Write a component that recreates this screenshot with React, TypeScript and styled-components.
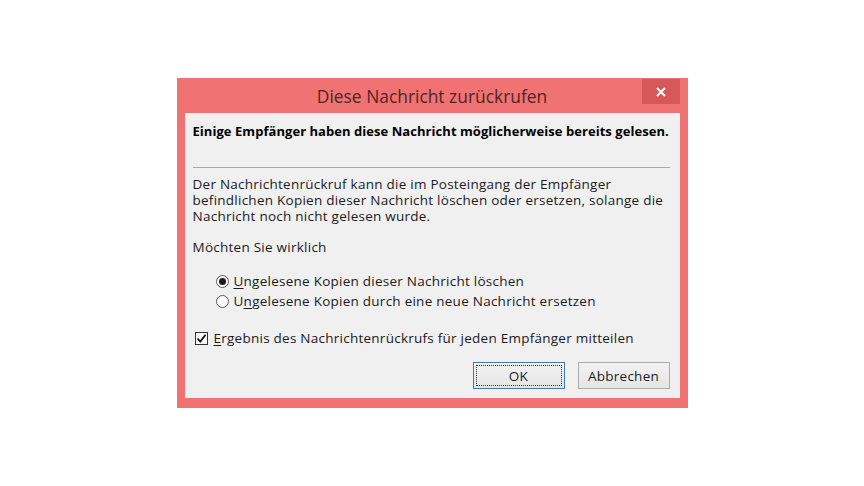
import React from "react";
import styled, { createGlobalStyle } from "styled-components";

const Global = createGlobalStyle`
  html, body { margin: 0; padding: 0; background: #ffffff; }
  body { font-family: "Open Sans", "Noto Sans", sans-serif; }
`;

const Page = styled.div`
  width: 864px;
  height: 486px;
  display: flex;
  align-items: center;
  justify-content: center;
`;

const Window = styled.div`
  width: 511px;
  box-sizing: border-box;
  background: #f07272;
  padding: 0 8px 10px 8px;
  display: flex;
  flex-direction: column;
`;

const TitleBar = styled.div`
  height: 35px;
  display: grid;
  grid-template-columns: 38px 1fr 38px;
  align-items: start;
`;

const Title = styled.div`
  grid-column: 2;
  text-align: center;
  font-size: 17.4px;
  line-height: 36px;
  color: #4f2626;
`;

const CloseButton = styled.div`
  grid-column: 3;
  margin-top: 1px;
  height: 25px;
  background: #d65858;
  display: flex;
  align-items: center;
  justify-content: center;
`;

const Content = styled.div`
  background: #f0f0f0;
  padding: 10px 10px 9px 8px;
  color: #1b1b1b;
  font-size: 13.5px;
  letter-spacing: 0.25px;
  line-height: 16px;
`;

const Headline = styled.div`
  font-weight: 700;
  font-size: 13px;
  letter-spacing: 0.05px;
  color: #000;
`;

const Separator = styled.div`
  height: 1px;
  background: #a8a8a8;
  margin: 28px 0 8px 0;
`;

const Paragraph = styled.div``;

const Question = styled.div`
  margin-top: 15px;
`;

const Options = styled.div`
  margin-top: 16px;
  padding-left: 23px;
  display: flex;
  flex-direction: column;
`;

const OptionRow = styled.div`
  height: 20px;
  display: flex;
  align-items: center;
  gap: 5px;
`;

const Radio = styled.span<{ $checked?: boolean }>`
  width: 13px;
  height: 13px;
  box-sizing: border-box;
  border-radius: 50%;
  border: 1px solid #5a5a5a;
  background: #fff;
  display: inline-flex;
  align-items: center;
  justify-content: center;
  &::after {
    content: "";
    width: 7px;
    height: 7px;
    border-radius: 50%;
    background: ${(p) => (p.$checked ? "#1a1a1a" : "transparent")};
  }
`;

const CheckRow = styled.div`
  margin-top: 17px;
  height: 20px;
  display: flex;
  align-items: center;
  gap: 6px;
  padding-left: 2px;
`;

const CheckBox = styled.span`
  width: 13px;
  height: 13px;
  box-sizing: border-box;
  border: 1px solid #333;
  background: #fff;
  display: inline-flex;
  align-items: center;
  justify-content: center;
`;

const Mn = styled.span`
  text-decoration: underline;
  text-underline-offset: 2px;
`;

const ButtonRow = styled.div`
  margin-top: 14px;
  display: flex;
  justify-content: flex-end;
  gap: 13px;
`;

const Button = styled.div<{ $default?: boolean }>`
  width: 92px;
  height: 27px;
  box-sizing: border-box;
  border: 1px solid ${(p) => (p.$default ? "#3d7bad" : "#adadad")};
  background: linear-gradient(#f2f2f2, #e5e5e5);
  display: flex;
  align-items: center;
  justify-content: center;
  padding: 2px;
  color: #1b1b1b;
`;

const Focus = styled.div<{ $on?: boolean }>`
  flex: 1;
  align-self: stretch;
  border: 1px dotted ${(p) => (p.$on ? "#333" : "transparent")};
  display: flex;
  align-items: center;
  justify-content: center;
`;

export default function App() {
  return (
    <>
      <Global />
      <Page>
        <Window>
          <TitleBar>
            <Title>Diese Nachricht zurückrufen</Title>
            <CloseButton>
              <svg width="10" height="10" viewBox="0 0 10 10">
                <path d="M1 1 L9 9 M9 1 L1 9" stroke="#ffffff" strokeWidth="2" />
              </svg>
            </CloseButton>
          </TitleBar>
          <Content>
            <Headline>Einige Empfänger haben diese Nachricht möglicherweise bereits gelesen.</Headline>
            <Separator />
            <Paragraph>
              Der Nachrichtenrückruf kann die im Posteingang der Empfänger
              <br />
              befindlichen Kopien dieser Nachricht löschen oder ersetzen, solange die
              <br />
              Nachricht noch nicht gelesen wurde.
            </Paragraph>
            <Question>Möchten Sie wirklich</Question>
            <Options>
              <OptionRow>
                <Radio $checked />
                <span>
                  <Mn>U</Mn>ngelesene Kopien dieser Nachricht löschen
                </span>
              </OptionRow>
              <OptionRow>
                <Radio />
                <span>
                  U<Mn>n</Mn>gelesene Kopien durch eine neue Nachricht ersetzen
                </span>
              </OptionRow>
            </Options>
            <CheckRow>
              <CheckBox>
                <svg width="11" height="11" viewBox="0 0 11 11">
                  <path d="M1.5 5.5 L4.3 8.5 L9.5 1.8" stroke="#111" strokeWidth="1.8" fill="none" />
                </svg>
              </CheckBox>
              <span>
                <Mn>E</Mn>rgebnis des Nachrichtenrückrufs für jeden Empfänger mitteilen
              </span>
            </CheckRow>
            <ButtonRow>
              <Button $default>
                <Focus $on>OK</Focus>
              </Button>
              <Button>
                <Focus>Abbrechen</Focus>
              </Button>
            </ButtonRow>
          </Content>
        </Window>
      </Page>
    </>
  );
}
